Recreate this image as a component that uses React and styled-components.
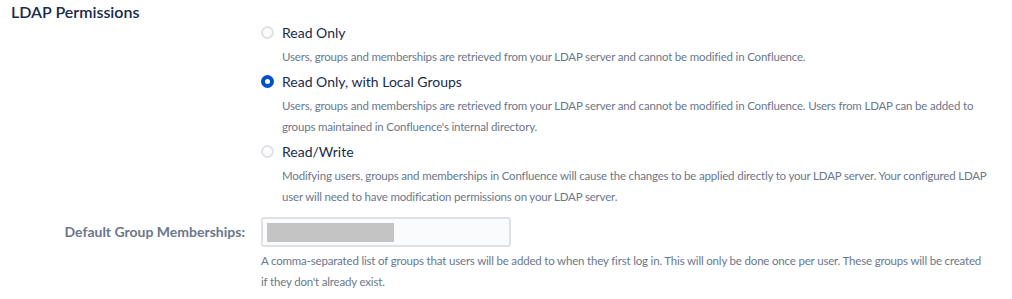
import React from "react";
import styled, { createGlobalStyle } from "styled-components";

const Global = createGlobalStyle`
  html, body { margin: 0; padding: 0; background: #fff; }
  body { font-family: Lato, "Liberation Sans", sans-serif; color: #172b4d; }
`;

const Page = styled.div`
  padding: 2px 0 0 11px;
`;

const Heading = styled.h3`
  margin: 0;
  font-size: 16px;
  line-height: 20px;
  font-weight: 600;
  color: #172b4d;
`;

const Form = styled.div`
  display: grid;
  grid-template-columns: 234px 740px;
  column-gap: 16px;
  align-items: start;
`;

const Label = styled.label`
  grid-column: 1;
  margin-top: ${(p) => p.$top || 0}px;
  text-align: right;
  font-size: 14px;
  font-weight: 700;
  color: #6b778c;
  line-height: 30px;
`;

const Control = styled.div`
  grid-column: 2;
  display: flex;
  flex-direction: column;
  margin-top: ${(p) => p.$top || 0}px;
`;

const Option = styled.div`
  display: flex;
  flex-direction: column;
  margin-bottom: ${(p) => p.$gap || 0}px;
`;

const RadioRow = styled.div`
  display: flex;
  align-items: center;
  gap: 8px;
  height: 20px;
  font-size: 14px;
  color: #172b4d;
`;

const Radio = styled.span`
  box-sizing: border-box;
  width: 13px;
  height: 13px;
  border-radius: 50%;
  display: inline-flex;
  align-items: center;
  justify-content: center;
  background: ${(p) => (p.$checked ? "#0052cc" : "#fafbfc")};
  border: 2px solid ${(p) => (p.$checked ? "#0052cc" : "#dfe1e6")};
  &::after {
    content: "";
    width: 5px;
    height: 5px;
    border-radius: 50%;
    background: #fff;
    display: ${(p) => (p.$checked ? "block" : "none")};
  }
`;

const SmallText = styled.p`
  font-size: 11.5px;
  letter-spacing: -0.18px;
  line-height: 21px;
  color: #6b778c;
`;

const Description = styled(SmallText)`
  margin: 4px 0 0 21px;
`;

const Help = styled(SmallText)`
  margin: 3px 0 0 0;
  max-width: 727px;
`;

const Input = styled.div`
  box-sizing: border-box;
  width: 250px;
  height: 30px;
  background: #fafbfc;
  border: 2px solid #dfe1e6;
  border-radius: 3px;
  padding: 4px 4px;
`;

const Redacted = styled.div`
  width: 127px;
  height: 19px;
  background: #c4c4c4;
`;

const options = [
  {
    label: "Read Only",
    desc: "Users, groups and memberships are retrieved from your LDAP server and cannot be modified in Confluence.",
  },
  {
    label: "Read Only, with Local Groups",
    checked: true,
    desc: "Users, groups and memberships are retrieved from your LDAP server and cannot be modified in Confluence. Users from LDAP can be added to groups maintained in Confluence's internal directory.",
  },
  {
    label: "Read/Write",
    desc: "Modifying users, groups and memberships in Confluence will cause the changes to be applied directly to your LDAP server. Your configured LDAP user will need to have modification permissions on your LDAP server.",
  },
];

export default function App() {
  return (
    <>
      <Global />
      <Page>
        <Heading>LDAP Permissions</Heading>
        <Form>
          <Control>
            {options.map((o, i) => (
              <Option key={i} $gap={i < options.length - 1 ? 4 : 0}>
                <RadioRow>
                  <Radio $checked={o.checked} />
                  {o.label}
                </RadioRow>
                <Description>{o.desc}</Description>
              </Option>
            ))}
          </Control>
          <Label $top={10}>Default Group Memberships:</Label>
          <Control $top={10}>
            <Input>
              <Redacted />
            </Input>
            <Help>
              A comma-separated list of groups that users will be added to when they first log in. This will only be done once per user. These groups will be created if they don't already exist.
            </Help>
          </Control>
        </Form>
      </Page>
    </>
  );
}
